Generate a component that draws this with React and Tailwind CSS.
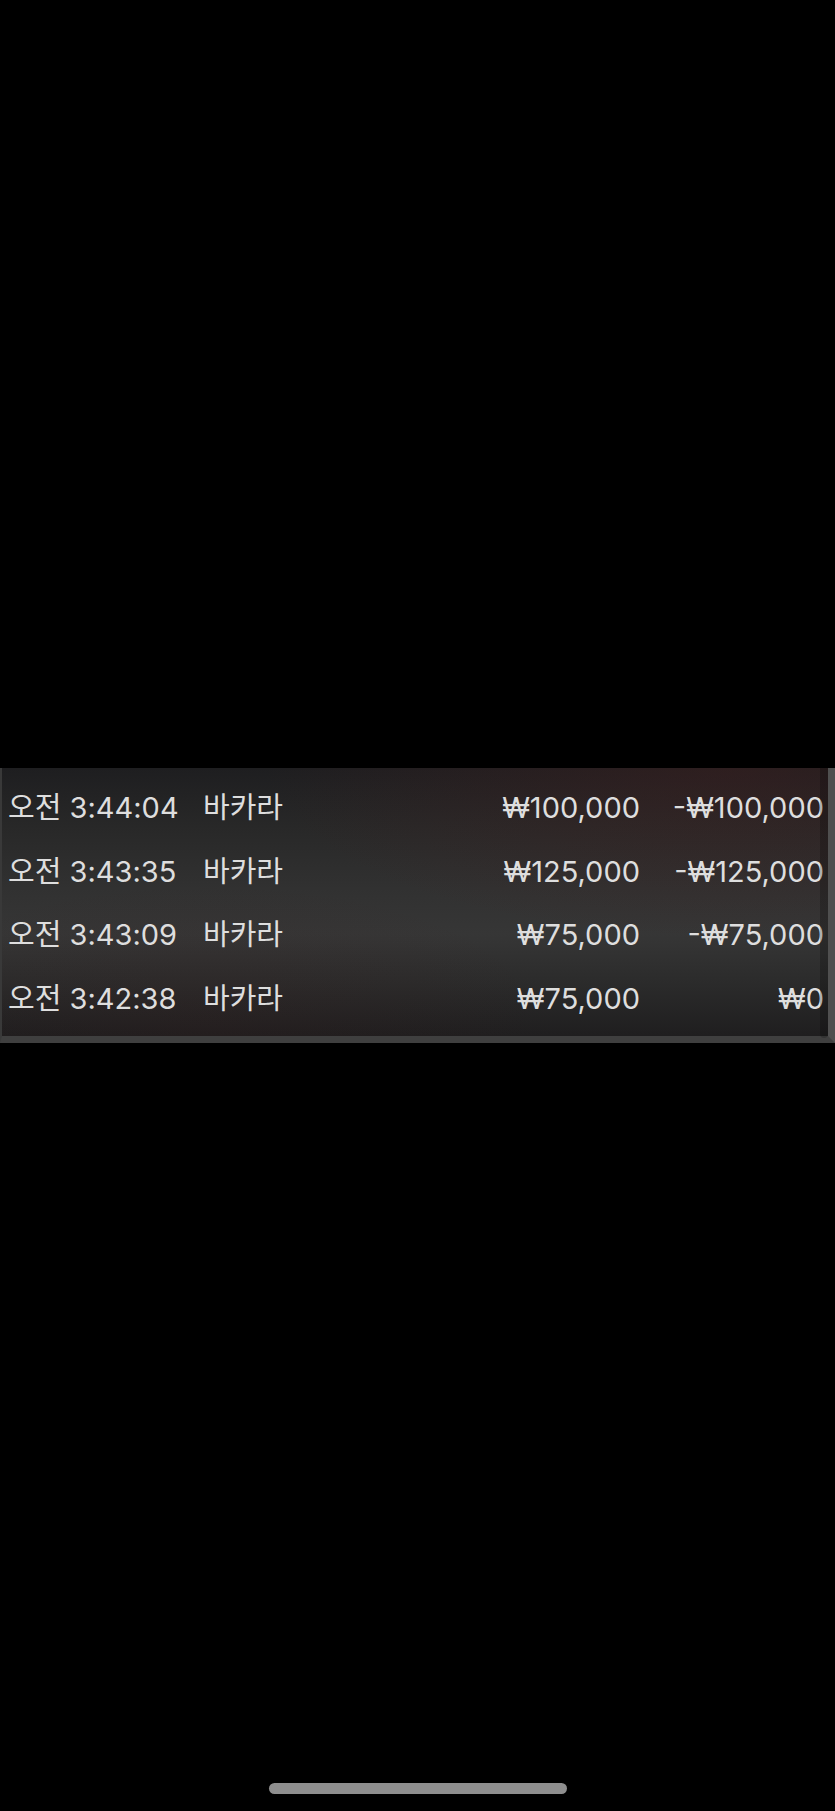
import React from 'react'

const rows = [
  { time: '오전 3:44:04', game: '바카라', bet: '₩100,000', result: '-₩100,000' },
  { time: '오전 3:43:35', game: '바카라', bet: '₩125,000', result: '-₩125,000' },
  { time: '오전 3:43:09', game: '바카라', bet: '₩75,000', result: '-₩75,000' },
  { time: '오전 3:42:38', game: '바카라', bet: '₩75,000', result: '₩0' },
]

const HistoryRow = ({ row }) => (
  <div className="flex h-[63.5px] items-center text-[29px] leading-none text-[#dedede]">
    <div className="w-[201px] shrink-0 pl-[6px]">{row.time}</div>
    <div className="flex-1">{row.game}</div>
    <div className="w-[185px] shrink-0 pr-[3px] text-right">{row.bet}</div>
    <div className="w-[185px] shrink-0 pr-[4px] text-right">{row.result}</div>
  </div>
)

export default function App() {
  return (
    <div
      className="flex h-[1811px] w-full flex-col bg-black"
      style={{ fontFamily: 'Inter, "Noto Sans CJK KR", sans-serif' }}
    >
      <div className="relative mt-[768px] border-b-[7px] border-l-2 border-r-[7px] border-b-[#3f3f3f] border-l-[#393939] border-r-[#4f4f4f] bg-[image:radial-gradient(ellipse_at_88%_0%,rgba(70,30,30,0.4),transparent_45%),radial-gradient(ellipse_at_25%_95%,rgba(60,25,25,0.15),transparent_40%),linear-gradient(180deg,#1e1e20_0%,#282828_22%,#313131_45%,#363636_62%,#2a2a2a_82%,#1f1e1f_100%)]">
        <div className="pt-[8px] pb-[6px]">
          {rows.map((row, i) => (
            <HistoryRow key={i} row={row} />
          ))}
        </div>
        <div className="absolute right-0 top-0 h-[270px] w-[8px] rounded-b-full bg-black/20" />
      </div>

      <div className="mt-auto mb-[17px] flex justify-center">
        <div className="h-[11px] w-[298px] rounded-full bg-[#8e8e8e]" />
      </div>
    </div>
  )
}
